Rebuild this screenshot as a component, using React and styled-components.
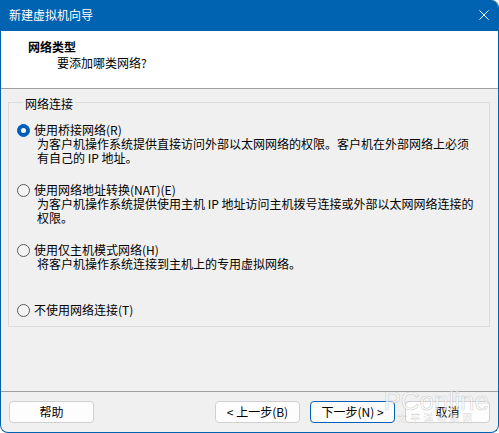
import styled, { createGlobalStyle } from "styled-components";

const GlobalStyle = createGlobalStyle`
  html, body {
    margin: 0;
    padding: 0;
    background: #ffffff;
  }
  * {
    box-sizing: border-box;
  }
`;

const FONT = `"Noto Sans CJK SC", "Liberation Sans", sans-serif`;

const Window = styled.div`
  position: relative;
  width: 499px;
  height: 433px;
  display: flex;
  flex-direction: column;
  background: #f0f0f0;
  border: 1px solid #0063b1;
  border-top: none;
  border-radius: 0 8px 8px 8px;
  overflow: hidden;
  font-family: ${FONT};
  font-size: 12px;
  color: #000;
`;

const TitleBar = styled.div`
  height: 31px;
  flex: none;
  display: flex;
  align-items: center;
  justify-content: space-between;
  padding: 0 9px 2px 8px;
  background: #0063b1;
  color: #fff;
  line-height: 14px;
`;

const CloseIcon = styled.svg`
  width: 10px;
  height: 10px;
  display: block;
`;

const Header = styled.div`
  height: 58px;
  flex: none;
  background: #fff;
  border-bottom: 1px solid #a0a0a0;
  padding: 9px 0 0 27px;
  line-height: 14px;
`;

const HeaderTitle = styled.div`
  font-weight: bold;
`;

const HeaderSub = styled.div`
  margin: 2px 0 0 29px;
`;

const Body = styled.div`
  flex: 1;
  padding: 13px 8px 0 7px;
`;

const GroupBox = styled.div`
  height: 225px;
  border: 1px solid #dcdcdc;
  padding: 0 8px 0 8px;
`;

const Legend = styled.div`
  width: fit-content;
  margin: -6px 0 0 6px;
  padding: 0 2px;
  background: #f0f0f0;
  line-height: 14px;
`;

const Options = styled.div`
  display: grid;
  grid-template-rows: repeat(3, 60px) auto;
  margin-top: 12px;
`;

const Option = styled.div`
  display: flex;
  flex-direction: column;
  line-height: 14px;
`;

const OptionLabel = styled.label`
  display: flex;
  align-items: center;
  gap: 4px;
  cursor: default;
`;

const Radio = styled.span`
  width: 13px;
  height: 13px;
  flex: none;
  border-radius: 50%;
  display: flex;
  align-items: center;
  justify-content: center;
  background: ${(p) => (p.$checked ? "#005fb8" : "#f4f4f4")};
  border: 1px solid ${(p) => (p.$checked ? "#005fb8" : "#5c5c5c")};

  &::after {
    content: "";
    display: ${(p) => (p.$checked ? "block" : "none")};
    width: 5px;
    height: 5px;
    border-radius: 50%;
    background: #fff;
  }
`;

const Desc = styled.div`
  margin-left: 20px;
  width: 440px;
`;

const Footer = styled.div`
  height: 41px;
  flex: none;
  border-top: 1px solid #a0a0a0;
  display: flex;
  align-items: flex-start;
  padding: 9px 8px 0 8px;
  gap: 10px;
`;

const Button = styled.button`
  width: 85px;
  height: 22px;
  padding: 0;
  border-radius: 4px;
  border: 1px solid ${(p) => (p.$primary ? "#005fb8" : "#d0d0d0")};
  background: #fdfdfd;
  font-family: ${FONT};
  font-size: 12px;
  line-height: 14px;
  color: #000;
`;

const Spacer = styled.div`
  flex: 1;
`;

const Watermark = styled.div`
  position: absolute;
  right: 9px;
  bottom: 9px;
  display: flex;
  flex-direction: column;
  align-items: center;
  pointer-events: none;
  opacity: 0.8;
`;

const WatermarkLogo = styled.div`
  font-family: "Liberation Sans", sans-serif;
  font-size: 26px;
  line-height: 22px;
  color: rgba(255, 255, 255, 0.85);
  -webkit-text-stroke: 0.6px rgba(170, 170, 170, 0.7);
`;

const WatermarkSub = styled.div`
  font-size: 10px;
  line-height: 11px;
  letter-spacing: 3px;
  color: rgba(255, 255, 255, 0.8);
  -webkit-text-stroke: 0.3px rgba(170, 170, 170, 0.6);
`;

const options = [
  {
    label: "使用桥接网络(R)",
    desc: "为客户机操作系统提供直接访问外部以太网网络的权限。客户机在外部网络上必须有自己的 IP 地址。",
    checked: true,
  },
  {
    label: "使用网络地址转换(NAT)(E)",
    desc: "为客户机操作系统提供使用主机 IP 地址访问主机拨号连接或外部以太网网络连接的权限。",
  },
  {
    label: "使用仅主机模式网络(H)",
    desc: "将客户机操作系统连接到主机上的专用虚拟网络。",
  },
  { label: "不使用网络连接(T)" },
];

export default function App() {
  return (
    <>
      <GlobalStyle />
      <Window>
        <TitleBar>
          <span>新建虚拟机向导</span>
          <CloseIcon viewBox="0 0 10 10">
            <path d="M0.5 0.5 L9.5 9.5 M9.5 0.5 L0.5 9.5" stroke="#fff" strokeWidth="1" />
          </CloseIcon>
        </TitleBar>
        <Header>
          <HeaderTitle>网络类型</HeaderTitle>
          <HeaderSub>要添加哪类网络?</HeaderSub>
        </Header>
        <Body>
          <GroupBox>
            <Legend>网络连接</Legend>
            <Options>
              {options.map((o) => (
                <Option key={o.label}>
                  <OptionLabel>
                    <Radio $checked={o.checked} />
                    {o.label}
                  </OptionLabel>
                  {o.desc && <Desc>{o.desc}</Desc>}
                </Option>
              ))}
            </Options>
          </GroupBox>
        </Body>
        <Footer>
          <Button>帮助</Button>
          <Spacer />
          <Button>&lt; 上一步(B)</Button>
          <Button $primary>下一步(N) &gt;</Button>
          <Button>取消</Button>
        </Footer>
        <Watermark>
          <WatermarkLogo>PConline</WatermarkLogo>
          <WatermarkSub>太平洋电脑网</WatermarkSub>
        </Watermark>
      </Window>
    </>
  );
}
